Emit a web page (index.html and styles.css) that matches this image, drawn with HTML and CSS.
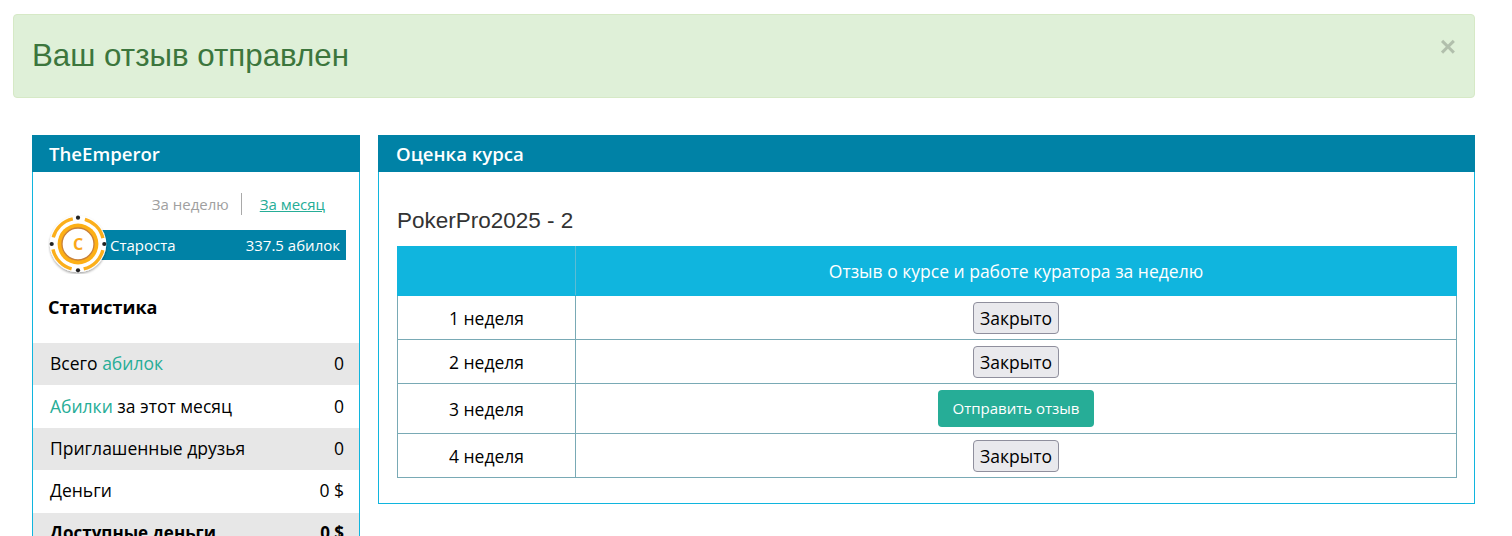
FILE: index.html
```html
<!DOCTYPE html>
<html lang="ru">
<head>
<meta charset="utf-8">
<title>Оценка курса</title>
<link rel="stylesheet" href="styles.css">
</head>
<body>
<div class="alert">
  <h1 class="alert-title">Ваш отзыв отправлен</h1>
  <span class="alert-close">×</span>
</div>
<div class="columns">
  <aside class="panel side">
    <div class="panel-head">TheEmperor</div>
    <div class="tabs">
      <span class="tab tab-muted">За неделю</span>
      <a class="tab tab-link" href="#">За месяц</a>
    </div>
    <div class="rank">
      <div class="rank-bar"><span>Староста</span><span>337.5 абилок</span></div>
      <svg class="chip" viewBox="0 0 60 60" width="60" height="60" aria-hidden="true">
        <defs><filter id="s" x="-20%" y="-20%" width="140%" height="140%"><feDropShadow dx="0" dy="1.5" stdDeviation="1.2" flood-color="#000" flood-opacity=".35"/></filter></defs>
        <circle cx="30" cy="30" r="28.3" fill="#fff" filter="url(#s)"/>
        <circle cx="30" cy="30" r="25.6" fill="none" stroke="#fbaf1c" stroke-width="3.4" stroke-dasharray="28.2 12" stroke-dashoffset="14.1" transform="rotate(-45 30 30)"/>
        <circle cx="30" cy="30" r="20.4" fill="#fdb015"/>
        <circle cx="30" cy="30" r="16" fill="#fff" stroke="#c9803a" stroke-width="1.3"/>
        <circle cx="30" cy="3.7" r="2.1" fill="#222"/>
        <circle cx="30" cy="56.3" r="2.1" fill="#222"/>
        <circle cx="3.7" cy="30" r="2.1" fill="#222"/>
        <circle cx="56.3" cy="30" r="2.1" fill="#222"/>
        <text x="30" y="36" text-anchor="middle" class="chip-letter">C</text>
      </svg>
    </div>
    <h3 class="stats-title">Статистика</h3>
    <ul class="stats">
      <li class="stat stat-a"><span>Всего <a href="#">абилок</a></span><span>0</span></li>
      <li class="stat"><span><a href="#">Абилки</a> за этот месяц</span><span>0</span></li>
      <li class="stat stat-a"><span>Приглашенные друзья</span><span>0</span></li>
      <li class="stat"><span>Деньги</span><span>0 $</span></li>
      <li class="stat stat-a stat-b"><span>Доступные деньги</span><span>0 $</span></li>
    </ul>
  </aside>
  <main class="panel main">
    <div class="panel-head main-head">Оценка курса</div>
    <div class="main-body">
      <h2 class="course">PokerPro2025 - 2</h2>
      <table class="grid">
        <thead>
          <tr><th class="c1"></th><th>Отзыв о курсе и работе куратора за неделю</th></tr>
        </thead>
        <tbody>
          <tr><td>1 неделя</td><td><button class="btn-closed">Закрыто</button></td></tr>
          <tr><td>2 неделя</td><td><button class="btn-closed">Закрыто</button></td></tr>
          <tr class="row-open"><td>3 неделя</td><td><a class="btn-send" href="#">Отправить отзыв</a></td></tr>
          <tr><td>4 неделя</td><td><button class="btn-closed">Закрыто</button></td></tr>
        </tbody>
      </table>
    </div>
  </main>
</div>
</body>
</html>
```
FILE: styles.css
```css
* { box-sizing: border-box; }
html, body { height: 536px; overflow: hidden; }
body { margin: 0; padding: 14px 37px 0 13px; background: #fff; font-family: "Open Sans", sans-serif; font-size: 16px; color: #000; }
a { color: #26ad97; text-decoration: none; }

.alert { display: flex; justify-content: space-between; height: 84px; padding: 0 19px; background: #dff0d8; border: 1px solid #d6e9c6; border-radius: 4px; color: #3c763d; }
.alert-title { margin: 0 0 0 -1px; padding-top: 23px; font: 400 31.3px/36px "Liberation Sans", sans-serif; }
.alert-close { margin: 14px -1px 0 0; font: 700 28px/36px "Liberation Sans", sans-serif; color: #000; opacity: .2; }

.columns { display: flex; align-items: flex-start; gap: 18px; margin-top: 37px; padding-left: 19px; }
.panel { border: 1px solid #10b5de; border-top: 0; background: #fff; }
.side { width: 328px; flex: none; }
.main { flex: 1; height: 369px; }
.panel-head { height: 37px; margin: 0 -1px; padding: 0 18px 0 17px; background: #0082a6; color: #fff; font-size: 18.6px; font-weight: 600; line-height: 37px; }
.main-head { padding-left: 18px; }

.tabs { display: flex; justify-content: flex-end; align-items: center; height: 22px; margin-top: 21px; padding-right: 34px; font-size: 15px; }
.tab { line-height: 22px; }
.tab-muted { padding-right: 12px; color: #a0a0a0; border-right: 1px solid #a9a9a9; }
.tab-link { padding-left: 18px; text-decoration: underline; }

.rank { position: relative; height: 30px; margin: 15px 13px 0 16px; }
.chip { position: absolute; left: -1px; top: -16px; }
.chip-letter { font: 700 16px "Open Sans", sans-serif; fill: #fba81a; }
.rank-bar { display: flex; justify-content: space-between; align-items: center; height: 30px; margin-left: 30px; padding: 0 6px 0 31px; background: #0082a6; color: #fff; font-size: 15px; }

.stats-title { margin: 35px 0 0 15px; font-size: 18px; line-height: 24px; font-weight: 700; }
.stats { margin: 24px 0 0; padding: 0; list-style: none; }
.stat { display: flex; justify-content: space-between; align-items: center; height: 42.4px; padding: 0 15px 2px 17px; font-size: 17.5px; }
.stat-a { background: #e7e7e7; }
.stat-b { font-size: 17px; font-weight: 700; }

.main-body { padding: 0 17px 0 18px; }
.course { margin: 36px 0 12px; font: 400 22.5px/26px "Liberation Sans", sans-serif; color: #333; }
.grid { width: 100%; border-collapse: collapse; font-size: 17.5px; text-align: center; }
.grid th { height: 49px; padding: 0 0 1px; background: #10b5de; color: #fff; font-weight: 400; border: 1px solid #10b5de; }
.grid td { height: 44px; padding: 0; border: 1px solid #79aab5; }
.grid .c1 { width: 178px; border-right-color: #5cbcd4; }
.row-open td { height: 50px; }
.btn-closed { height: 32px; padding: 0 6px; background: #e9e9ed; border: 1px solid #8f8f9d; border-radius: 4px; color: #000; font: 400 17.5px "Open Sans", sans-serif; vertical-align: middle; }
.btn-send { display: inline-block; height: 37px; padding: 0 15px; background: #26ad97; border-radius: 4px; color: #fff; font-size: 15px; line-height: 37px; vertical-align: middle; }
```
